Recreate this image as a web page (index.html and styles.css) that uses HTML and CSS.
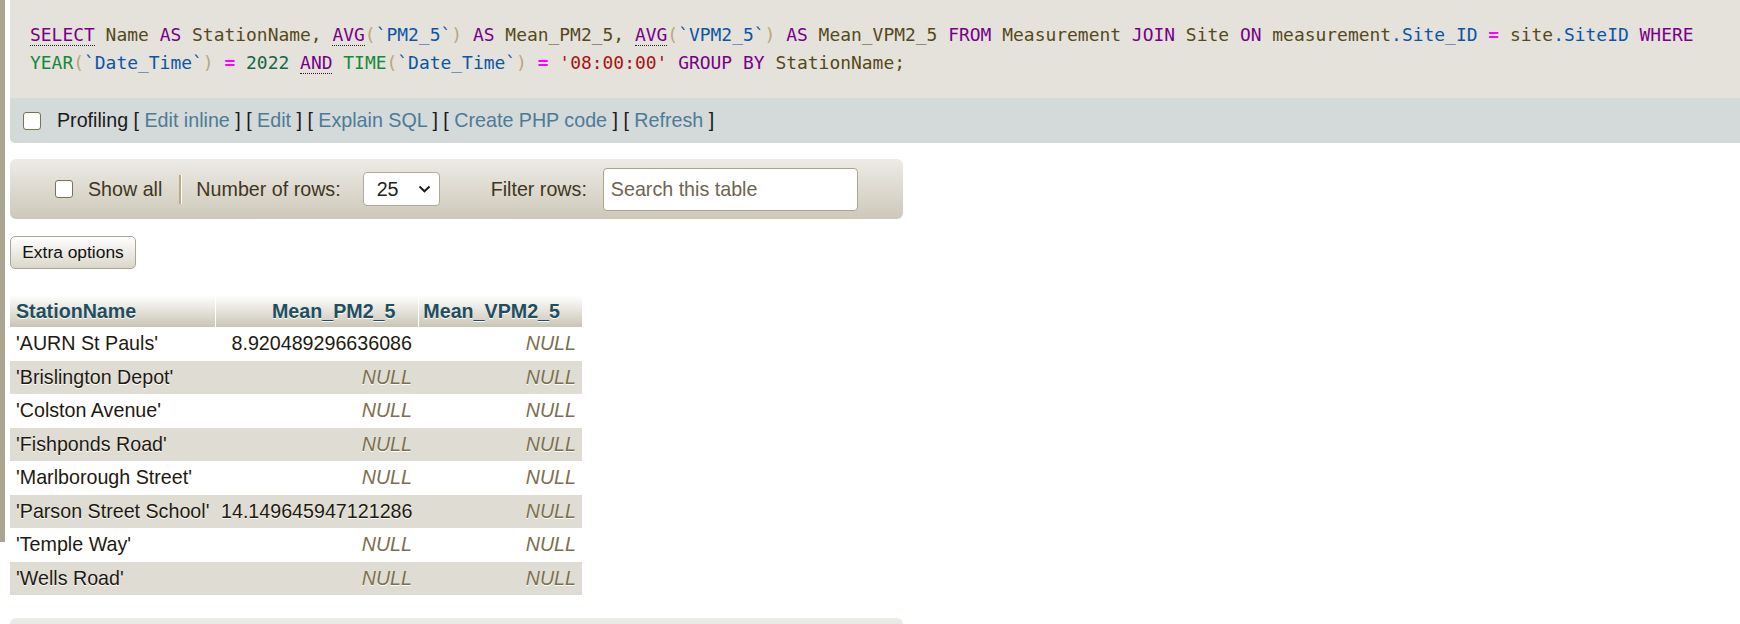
FILE: index.html
```html
<!DOCTYPE html>
<html>
<head>
<meta charset="utf-8">
<title>SQL result</title>
<link rel="stylesheet" href="styles.css">
</head>
<body>
<div class="page">
  <div class="edge"></div>
  <div class="main">
    <div class="result-query">
      <div class="sql-box"><code class="sql"><span class="kw u">SELECT</span> <span class="id">Name</span> <span class="kw">AS</span> <span class="id">StationName,</span> <span class="kw u">AVG</span><span class="br">(</span><span class="bt">`PM2_5`</span><span class="br">)</span> <span class="kw">AS</span> <span class="id">Mean_PM2_5,</span> <span class="kw u">AVG</span><span class="br">(</span><span class="bt">`VPM2_5`</span><span class="br">)</span> <span class="kw">AS</span> <span class="id">Mean_VPM2_5</span> <span class="kw">FROM</span> <span class="id">Measurement</span> <span class="kw">JOIN</span> <span class="id">Site</span> <span class="kw">ON</span> <span class="id">measurement</span><span class="bt">.Site_ID</span> <span class="op">=</span> <span class="id">site</span><span class="bt">.SiteID</span> <span class="kw">WHERE</span><br><span class="fn">YEAR</span><span class="br">(</span><span class="bt">`Date_Time`</span><span class="br">)</span> <span class="op">=</span> <span class="num">2022</span> <span class="kw u">AND</span> <span class="fn">TIME</span><span class="br">(</span><span class="bt">`Date_Time`</span><span class="br">)</span> <span class="op">=</span> <span class="str">'08:00:00'</span> <span class="kw">GROUP BY</span> <span class="id">StationName;</span></code></div>
      <div class="tools">
        <input type="checkbox" class="chk">
        <span class="tools-text">Profiling [ <a href="#">Edit inline</a> ] [ <a href="#">Edit</a> ] [ <a href="#">Explain SQL</a> ] [ <a href="#">Create PHP code</a> ] [ <a href="#">Refresh</a> ]</span>
      </div>
    </div>

    <div class="navigation">
      <input type="checkbox" class="chk">
      <span class="nav-label show-all">Show all</span>
      <span class="sep"></span>
      <span class="nav-label rows-label">Number of rows:</span>
      <div class="select"><span class="select-val">25</span><svg class="chev" width="13" height="8" viewBox="0 0 13 8"><polyline points="1.5,1.5 6.5,6.2 11.5,1.5" fill="none" stroke="#222" stroke-width="2.1"/></svg></div>
      <span class="nav-label filter-label">Filter rows:</span>
      <input class="search" type="text" placeholder="Search this table">
    </div>

    <button class="btn" type="button">Extra options</button>

    <table class="data">
      <colgroup><col class="c1"><col class="c2"><col class="c3"></colgroup>
      <thead>
        <tr><th class="left">StationName</th><th class="right">Mean_PM2_5</th><th class="right">Mean_VPM2_5</th></tr>
      </thead>
      <tbody>
        <tr class="odd"><td>'AURN St Pauls'</td><td class="right">8.920489296636086</td><td class="right null">NULL</td></tr>
        <tr class="even"><td>'Brislington Depot'</td><td class="right null">NULL</td><td class="right null">NULL</td></tr>
        <tr class="odd"><td>'Colston Avenue'</td><td class="right null">NULL</td><td class="right null">NULL</td></tr>
        <tr class="even"><td>'Fishponds Road'</td><td class="right null">NULL</td><td class="right null">NULL</td></tr>
        <tr class="odd"><td>'Marlborough Street'</td><td class="right null">NULL</td><td class="right null">NULL</td></tr>
        <tr class="even"><td>'Parson Street School'</td><td class="right">14.149645947121286</td><td class="right null">NULL</td></tr>
        <tr class="odd"><td>'Temple Way'</td><td class="right null">NULL</td><td class="right null">NULL</td></tr>
        <tr class="even"><td>'Wells Road'</td><td class="right null">NULL</td><td class="right null">NULL</td></tr>
      </tbody>
    </table>

    <div class="navigation bottom-nav"></div>
  </div>
</div>
</body>
</html>
```

FILE: styles.css
```css
html, body {
  margin: 0;
  padding: 0;
  background: #ffffff;
  overflow: hidden;
}

body {
  font-family: "Liberation Sans", Arial, sans-serif;
  font-size: 19.68px;
  color: #222;
}

.page {
  display: flex;
  align-items: flex-start;
}

.edge {
  flex: none;
  width: 5px;
  height: 542px;
  background: #aaa590;
}

.main {
  flex: 1;
  margin-left: 5px;
  min-width: 0;
}

/* SQL query box */
.result-query {
  border-bottom-left-radius: 5px;
  overflow: hidden;
}

.sql-box {
  background: #e5e2dc;
  padding: 21px 20px 21px 20px;
  height: 56px;
}

code.sql {
  display: block;
  font-family: "DejaVu Sans Mono", "Liberation Mono", monospace;
  font-size: 17.96px;
  line-height: 28px;
  white-space: nowrap;
  color: #55491a;
}

.kw { color: #770088; }
.u { border-bottom: 1px dotted #222; }
.id { color: #55491a; }
.br { color: #b8a77c; }
.bt { color: #0b55a6; }
.op { color: #ff00ff; font-weight: bold; }
.fn { color: #138a3a; }
.num { color: #116644; }
.str { color: #aa1111; }

.tools {
  background: #d4d9da;
  height: 45px;
  display: flex;
  align-items: center;
  padding-left: 13px;
  color: #1a1a1a;
}

.tools-text {
  margin-left: 16px;
  white-space: nowrap;
}

.tools-text a {
  color: #4b7c97;
  text-decoration: none;
}

.chk {
  appearance: none;
  -webkit-appearance: none;
  flex: none;
  margin: 0;
  width: 18px;
  height: 18px;
  border: 1.5px solid #7a7257;
  border-radius: 3px;
  background: #fff;
  box-sizing: border-box;
}

/* navigation bar */
.navigation {
  margin-top: 16px;
  width: 893px;
  height: 60px;
  box-sizing: border-box;
  padding-left: 45px;
  display: flex;
  align-items: center;
  border-radius: 6px;
  background: linear-gradient(#edebe6, #cdc8b9);
  color: #3f3722;
  white-space: nowrap;
}

.nav-label {
  color: #3f3722;
}

.show-all { margin-left: 15px; }

.sep {
  margin-left: 17px;
  width: 2px;
  height: 29px;
  background: #b9a985;
  border-right: 1px solid #fff;
}

.rows-label { margin-left: 14px; }

.select {
  margin-left: 22px;
  width: 77px;
  height: 34px;
  box-sizing: border-box;
  border: 1px solid #b1ab95;
  border-radius: 4px;
  background: #fff;
  display: flex;
  align-items: center;
  padding-left: 13px;
  padding-right: 8px;
  color: #222;
}

.select-val { flex: 1; }

.chev { flex: none; }

.filter-label { margin-left: 51px; }

.search {
  margin-left: 16px;
  width: 255px;
  height: 43px;
  box-sizing: border-box;
  border: 1px solid #aaa48b;
  border-radius: 4px;
  background: #fff;
  padding: 0 7px;
  font-family: "Liberation Sans", Arial, sans-serif;
  font-size: 19.68px;
  color: #222;
  outline: none;
}

.search::placeholder {
  color: #6e6550;
  opacity: 1;
}

/* button */
.btn {
  display: block;
  margin-top: 17px;
  width: 126px;
  height: 33px;
  padding: 0;
  border: 1px solid #aba690;
  border-radius: 5px;
  background: linear-gradient(#ffffff, #dad6ca);
  font-family: "Liberation Sans", Arial, sans-serif;
  font-size: 17.4px;
  color: #111;
}

/* data table */
.data {
  margin-top: 26px;
  border-collapse: collapse;
  table-layout: fixed;
  width: 572px;
}

.c1 { width: 205px; }
.c2 { width: 203px; }
.c3 { width: 164px; }

.data th {
  height: 32px;
  padding: 0;
  font-weight: bold;
  color: #1f4e60;
  text-shadow: 0 1px 0 #fff;
  background: linear-gradient(#ffffff, #c9c5b5);
  white-space: nowrap;
}

.data th + th { border-left: 1px solid #fff; }

.data th.left { text-align: left; padding-left: 6px; }
.data th.right { text-align: right; padding-right: 22px; }

.data td {
  height: 33.5px;
  padding: 0 6px;
  white-space: nowrap;
  color: #1e1a10;
  text-shadow: 0 1px 0 #fff;
}

.data td.right { text-align: right; }

.data td.null {
  font-style: italic;
  color: #7b704f;
}

.data tr.odd td { background: #ffffff; }
.data tr.even td { background: #dfdcd4; }

.bottom-nav {
  margin-top: 23px;
}
```
